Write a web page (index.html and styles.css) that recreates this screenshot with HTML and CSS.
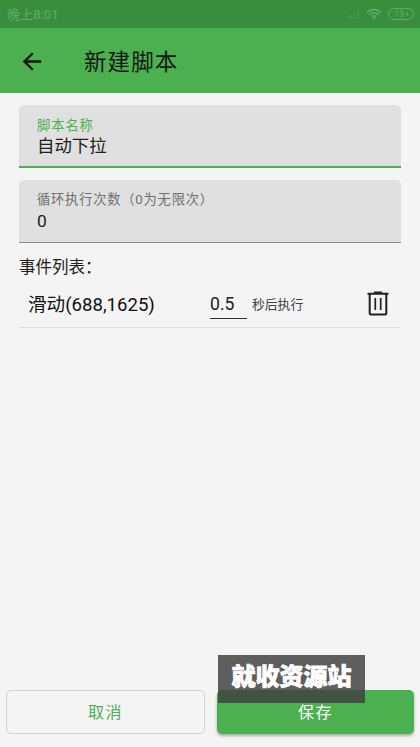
FILE: index.html
```html
<!DOCTYPE html>
<html lang="zh-CN">
<head>
<meta charset="utf-8">
<title>新建脚本</title>
<link rel="stylesheet" href="styles.css">
</head>
<body>
<div class="status">
  <span class="time">晚上8:01</span>
  <svg class="signal" width="14" height="12" viewBox="0 0 14 12"><path d="M1.5 11V9M5 11V7M8.500 11V4.500M12 11V1.500"/></svg>
  <svg class="wifi" width="16" height="12" viewBox="0 0 16 12"><path d="M1 4.300Q8-1.500 15 4.300M3.300 6.700Q8 2.700 12.700 6.700M5.600 9Q8 7 10.400 9"/><circle cx="8" cy="10.500" r="1.100"/></svg>
  <span class="battery">19<i></i></span>
</div>
<header class="appbar">
  <svg class="back" width="19" height="19" viewBox="0 0 19 19"><path d="M18.200 9.500H1.500M9.800 1.200L1.500 9.500l8.300 8.300"/></svg>
  <h1>新建脚本</h1>
</header>
<main>
  <div class="field active">
    <label>脚本名称</label>
    <div class="value">自动下拉</div>
  </div>
  <div class="field">
    <label class="count">循环执行次数（0为无限次）</label>
    <div class="value">0</div>
  </div>
  <h2>事件列表：</h2>
  <div class="event">
    <span class="name">滑动(688,1625)</span>
    <span class="delay">0.5</span>
    <span class="unit">秒后执行</span>
    <svg class="trash" width="22" height="25" viewBox="0 0 22 25"><path d="M.5 2.800h21M7 1.600h8M2.700 3v19.500q0 1 1 1h14.600q1 0 1-1V3"/><path class="thin" d="M8.300 7v12M13.700 7v12"/></svg>
  </div>
</main>
<footer>
  <div class="button cancel">取消</div>
  <div class="button save">保存</div>
  <div class="watermark">就收资源站</div>
</footer>
</body>
</html>
```

FILE: styles.css
```css
* { box-sizing: border-box; }
body {
  margin: 0;
  height: 747px;
  display: flex;
  flex-direction: column;
  overflow: hidden;
  background: #f4f4f4;
  color: #202020;
  font-family: Roboto, "Noto Sans CJK SC", sans-serif;
}
svg { flex: none; fill: none; stroke: currentColor; }
.status {
  height: 28px;
  flex: none;
  display: flex;
  align-items: center;
  padding: 0 6px 0 7px;
  background: #388e3c;
  color: #64ab67;
}
.time { flex: 1; padding-top: 2px; font-size: 13px; line-height: 28px; letter-spacing: .1px; }
.signal { margin-right: 6px; stroke-width: 1.5; opacity: .35; }
.wifi { margin-right: 6px; stroke-width: 1.5; }
.wifi circle { fill: currentColor; stroke: none; }
.battery {
  width: 26px;
  height: 12px;
  display: flex;
  align-items: center;
  justify-content: center;
  gap: 2px;
  border: 1px solid currentColor;
  border-radius: 6px;
  font-size: 9.5px;
  line-height: 10px;
}
.battery i { width: 2px; height: 4px; background: #36b52f; }
.appbar {
  height: 65px;
  flex: none;
  display: flex;
  align-items: center;
  padding: 1px 0 0 23px;
  background: #4caf50;
  color: #101a10;
}
.back { stroke-width: 2.3; }
h1 {
  margin: 2px 0 0 42px;
  font-size: 22.5px;
  line-height: 32px;
  font-weight: 400;
  letter-spacing: 1.1px;
}
main { flex: 1; padding: 12px 19px 0; }
.field {
  height: 63px;
  margin-bottom: 12px;
  padding: 11px 19px 0 18px;
  background: #e0e0e0;
  border-bottom: 1px solid #8b8b8b;
  border-radius: 5px 5px 0 0;
}
.field.active { border-bottom: 2px solid #4caf50; }
label {
  display: block;
  height: 19px;
  font-size: 13.3px;
  line-height: 20px;
  letter-spacing: .9px;
  color: #707070;
}
.active label { color: #4caf50; }
.count { line-height: 18px; letter-spacing: .75px; }
.value { font-size: 17.4px; line-height: 22px; }
h2 {
  margin: 0;
  padding-top: 1px;
  font-size: 16.5px;
  line-height: 24px;
  font-weight: 400;
}
.event {
  height: 48px;
  display: flex;
  align-items: center;
  padding: 0 12px 0 9px;
  border-bottom: 1px solid #dedede;
}
.name { width: 182px; margin-top: -2px; font-size: 18.6px; color: #111; }
.delay {
  width: 37px;
  height: 27px;
  margin-top: 4px;
  border-bottom: 1px solid #303030;
  font-size: 17.6px;
  line-height: 25px;
}
.unit { flex: 1; margin: -1px 0 0 5px; font-size: 12.8px; color: #404040; }
.trash { stroke-width: 2; }
.trash .thin { stroke-width: 1.7; }
footer {
  position: relative;
  display: flex;
  gap: 12px;
  padding: 0 6px 13px;
}
.button {
  flex: 1;
  height: 44px;
  border-radius: 5px;
  text-align: center;
  font-size: 16px;
  line-height: 46px;
  letter-spacing: 1.5px;
}
.cancel { border: 1px solid #d2d2d2; line-height: 44px; color: #4caf50; }
.save { background: #4caf50; color: #fff; box-shadow: 0 2px 3px rgba(0, 0, 0, .3); }
.watermark {
  position: absolute;
  left: 218px;
  top: -35px;
  width: 147px;
  height: 48px;
  background: rgba(64, 64, 64, .84);
  color: #fff;
  font: 900 24px/39px "Noto Sans CJK SC", sans-serif;
  -webkit-text-stroke: .7px #fff;
  text-align: center;
}
```
